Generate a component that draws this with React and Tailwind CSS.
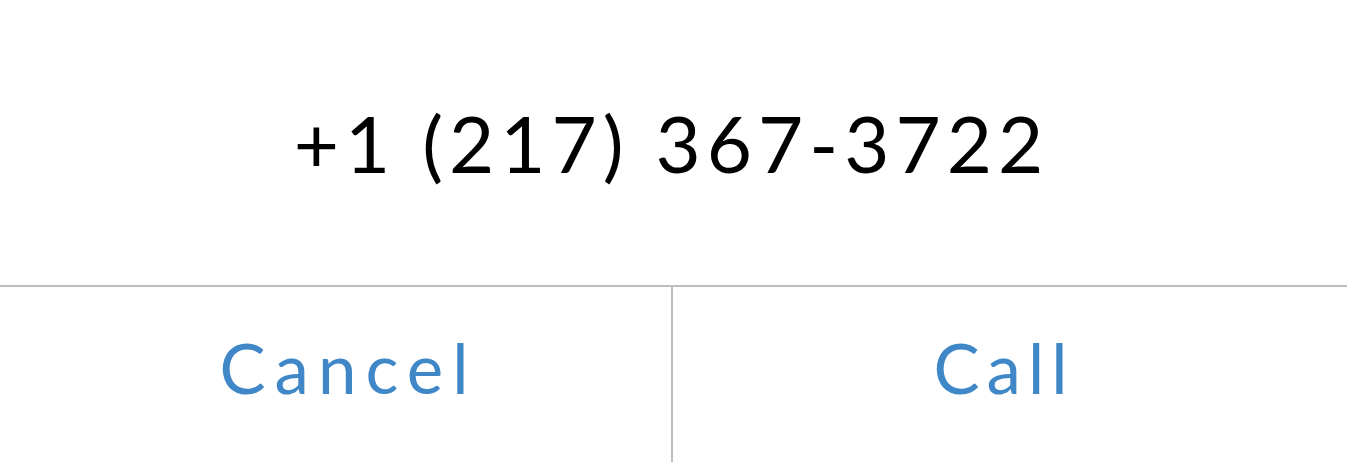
export default function App() {
  return (
    <div className="flex h-[462px] w-full flex-col bg-white font-['Lato',sans-serif]">
      {/* Numéro */}
      <div className="flex h-[287px] items-center justify-center border-b-2 border-[#bdbdbd]">
        <span className="pr-[4px] text-[78px] leading-none tracking-[6px] text-black">
          +1 (217) 367-3722
        </span>
      </div>

      {/* Boutons */}
      <div className="flex flex-1">
        <button className="flex w-[673px] items-center justify-center border-r-2 border-[#bdbdbd] pb-[14px] pl-[26px] text-[69px] leading-none tracking-[9px] text-[#3f87c7]">
          Cancel
        </button>
        <button className="flex flex-1 items-center justify-center pb-[14px] pr-[12px] text-[69px] leading-none tracking-[7px] text-[#3f87c7]">
          Call
        </button>
      </div>
    </div>
  );
}
